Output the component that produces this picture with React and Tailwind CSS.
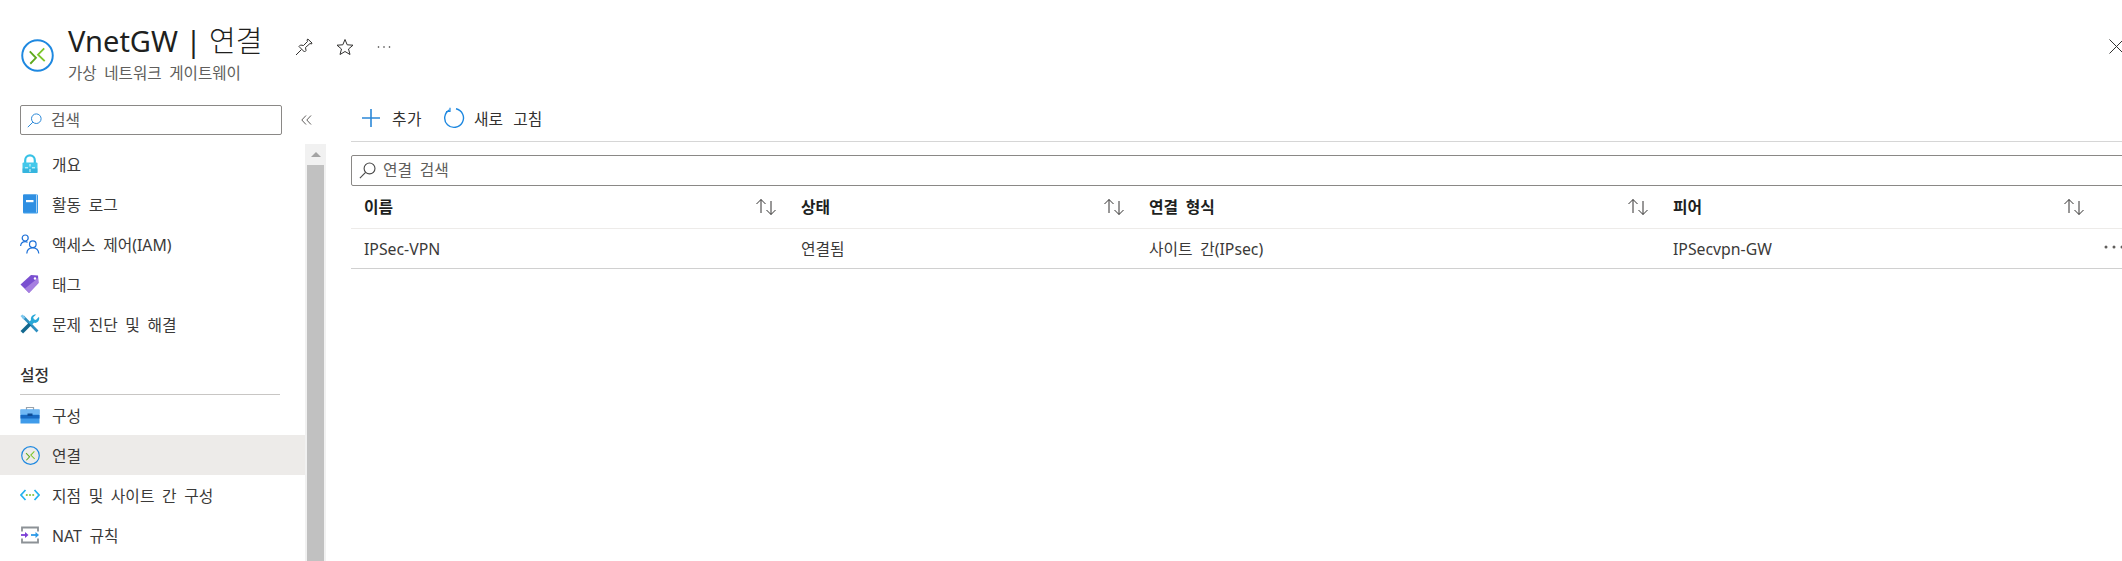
const Conn = ({ size = 20, sw = 1.9, chev = 1.8 }) => (
  <svg width={size} height={size} viewBox="0 0 32 32" fill="none">
    <circle cx="16" cy="16" r="14.8" stroke="#1e88e0" strokeWidth={sw} />
    <path d="M8.5 12 L14.5 18.2 L9 24" stroke="#5ea81e" strokeWidth={chev} />
    <path d="M22.5 9 L16.5 15.2 L23 21.5" stroke="#7cc52a" strokeWidth={chev} />
  </svg>
);
const SmallConn = () => <Conn size={19} sw={2} chev={1.7} />;
const Lock = () => (
  <svg width="20" height="20" viewBox="0 0 20 20" fill="none">
    <path d="M5.2 9V6.2a4.8 4.8 0 0 1 9.6 0V9" stroke="#37c2e6" strokeWidth="2.2" />
    <rect x="2.5" y="8.5" width="15" height="10.5" rx="1" fill="#45c8ea" />
    <rect x="2.5" y="14.5" width="15" height="4.5" fill="#2aa5d4" opacity=".55" />
    <path d="M10 10v2.5M10 15v3M5 13.8h3M12 13.8h3" stroke="#e8fbff" strokeWidth="1" />
  </svg>
);
const Book = () => (
  <svg width="20" height="20" viewBox="0 0 20 20" fill="none">
    <rect x="3" y="0.5" width="15" height="19" rx="1" fill="#3a9ae8" />
    <rect x="3" y="0.5" width="13.5" height="17.5" rx="1" fill="#2f8fe2" />
    <path d="M16.5 1v17.5" stroke="#a9d3f5" />
    <rect x="6" y="6" width="7.5" height="2.2" fill="#fff" />
  </svg>
);
const Users = () => (
  <svg width="20" height="20" viewBox="0 0 20 20" fill="none" stroke="#1a6fd8" strokeWidth="1.2">
    <circle cx="5.2" cy="4" r="3" />
    <path d="M0.6 12c.3-2.6 2-4.3 4.6-4.3 1 0 1.8.2 2.4.7" />
    <circle cx="12.8" cy="10.2" r="3.3" />
    <path d="M6.8 19.5c.2-3.4 2.6-5.6 6-5.6s5.6 2.2 6 5.6" />
  </svg>
);
const Tag = () => (
  <svg width="20" height="20" viewBox="0 0 20 20" fill="none">
    <path d="M0.5 10.5 L11 1 L18 1.5 L18.5 9 L9 19 Z" fill="#7a4fd0" />
    <path d="M5 14.5 L18 4 L18.5 9 L9 19 Z" fill="#a67fe0" />
    <circle cx="15" cy="4.5" r="1.2" fill="#fff" />
  </svg>
);
const Tools = () => (
  <svg width="20" height="20" viewBox="0 0 20 20" fill="none">
    <path d="M3 2.5 L17.5 17.5" stroke="#2e8fc0" strokeWidth="2.6" />
    <path d="M0.5 2 L2.5 0.5 L5.5 3.5 L3.5 5.5Z" fill="#7cc7ee" />
    <path d="M1.8 18.2 L10 10" stroke="#13688f" strokeWidth="3.6" />
    <path d="M19 2.8 L15.8 6 L13.8 5.2 L13.2 3.2 L16.2 0.5 C13 0 10.3 2.6 11 6 L8.5 8.8 L11.2 11.3 L14 8.8 C17.5 9.6 20 6.4 19 2.8Z" fill="#28a8d8" />
  </svg>
);
const Case = () => (
  <svg width="20" height="20" viewBox="0 0 20 20" fill="none">
    <path d="M6.5 5V2.5h7V5" stroke="#9ba3ab" strokeWidth="1.2" />
    <rect x="0.5" y="4.5" width="19" height="14" fill="#3f9bea" />
    <rect x="0.5" y="4.5" width="19" height="5" fill="#71b8f4" />
    <rect x="0.5" y="10" width="19" height="3.5" fill="#1769c2" />
    <rect x="7.5" y="8.5" width="5" height="2.5" fill="#0e4d96" />
  </svg>
);
const P2S = () => (
  <svg width="20" height="20" viewBox="0 0 20 20" fill="none">
    <path d="M5.5 5 L1 10 L5.5 15" stroke="#24b2ee" strokeWidth="1.7" />
    <path d="M14.5 5 L19 10 L14.5 15" stroke="#24b2ee" strokeWidth="1.7" />
    <circle cx="6.8" cy="10" r="1.1" fill="#86c440" />
    <circle cx="10" cy="10" r="1.1" fill="#86c440" />
    <circle cx="13.2" cy="10" r="1.1" fill="#86c440" />
  </svg>
);
const Nat = () => (
  <svg width="20" height="20" viewBox="0 0 20 20" fill="none">
    <path d="M2 6.5V2.5h16v4M2 13.5v4h16v-4" stroke="#8c9196" strokeWidth="1.8" />
    <path d="M1 10h5" stroke="#7c3fd6" strokeWidth="1.8" />
    <path d="M5 7l3.5 3L5 13Z" fill="#7c3fd6" />
    <path d="M11 10h5" stroke="#2e9be8" strokeWidth="1.8" />
    <path d="M15.5 7l3.5 3-3.5 3Z" fill="#2e9be8" />
  </svg>
);
const Search = ({ color = "#4a4a4a", size = 15 }) => (
  <svg width={size} height={size} viewBox="0 0 15 15" fill="none" stroke={color} strokeWidth="1">
    <circle cx="9.3" cy="5.7" r="4.8" />
    <path d="M5.8 9.2 L0.8 14.2" />
  </svg>
);
const Sort = () => (
  <svg width="22" height="18" viewBox="0 0 22 18" fill="none" stroke="#323130" strokeWidth="1">
    <path d="M6 15V1.5M1.5 6 L6 1.5 L10.5 6" />
    <path d="M16 3v13.5M11.5 12 L16 16.5 L20.5 12" />
  </svg>
);
const items1 = [
  [Lock, "개요"],
  [Book, "활동 로그"],
  [Users, "액세스 제어(IAM)"],
  [Tag, "태그"],
  [Tools, "문제 진단 및 해결"],
];
const items2 = [
  [Case, "구성"],
  [SmallConn, "연결", true],
  [P2S, "지점 및 사이트 간 구성"],
  [Nat, "NAT 규칙"],
];
const Item = ({ Icon, label, active }) => (
  <div className={`h-10 flex items-center pl-5 gap-[12px] text-[#3b3a39] ${active ? "bg-[#edebe9]" : ""}`}>
    <span className="w-[20px] h-[20px] flex items-center justify-center shrink-0"><Icon /></span>
    <span className="pt-[4px]">{label}</span>
  </div>
);
const cols = "grid grid-cols-[437px_348px_524px_470px]";
const Head = ({ children }) => (
  <div className="flex items-center justify-between pl-[13px] pr-[11px] font-semibold text-[#201f1e]">
    <span className="pt-[2px]">{children}</span><Sort />
  </div>
);
export default function App() {
  return (
    <div className="w-screen h-screen overflow-hidden bg-white">
      <div className="w-[2130px] h-[561px] flex flex-col text-[15.8px] [word-spacing:3.5px] text-[#323130]" style={{ fontFamily: '"Noto Sans","Noto Sans CJK KR",sans-serif' }}>
        <header className="h-[105px] shrink-0 flex pl-[21px] pr-[6px] pt-[23px]">
          <div className="mt-[16px] w-[33px] h-[33px] shrink-0"><Conn size={33} /></div>
          <div className="ml-[14px]">
            <h1 className="text-[29px] leading-[36px] font-normal text-[#201f1e] [word-spacing:0px]">VnetGW | <span className="font-light">연결</span></h1>
            <div className="mt-[5px] text-[15.6px] leading-[18px] text-[#605e5c]">가상 네트워크 게이트웨이</div>
          </div>
          <div className="ml-[33px] mt-[12px] flex items-center gap-[23px] h-[24px] text-[#323130]">
            <svg width="18" height="18" viewBox="0 0 18 18" fill="none" stroke="#323130" strokeWidth="1">
              <path d="M1 17 L6.5 11.5 M4 8.5 L9.5 14 L11 12.5 L10.5 9.5 L15 5.5 L16.5 6 L17 5 L12.8 1 L12 2 L12.5 3.5 L8.5 7.5 L5.5 7 Z" />
            </svg>
            <svg width="18" height="18" viewBox="0 0 18 18" fill="none" stroke="#323130" strokeWidth="1">
              <path d="M9 1.5 L11.2 6.8 L17 7.2 L12.5 11 L14 16.5 L9 13.5 L4 16.5 L5.5 11 L1 7.2 L6.8 6.8 Z" />
            </svg>
            <svg width="14" height="4" viewBox="0 0 14 4" fill="#323130">
              <circle cx="1.5" cy="2" r="0.8" /><circle cx="7" cy="2" r="0.8" /><circle cx="12.5" cy="2" r="0.8" />
            </svg>
          </div>
          <svg className="ml-auto mt-[16px] shrink-0" width="15" height="15" viewBox="0 0 15 15" fill="none" stroke="#323130" strokeWidth="1">
            <path d="M0.5 0.5 L14.5 14.5 M14.5 0.5 L0.5 14.5" />
          </svg>
        </header>
        <div className="flex-1 flex min-h-0">
          <aside className="w-[326px] shrink-0 flex flex-col min-h-0">
            <div className="h-[39px] shrink-0 flex pl-[20px]">
              <div className="w-[262px] h-[30px] border border-[#8a8886] rounded-[2px] flex items-center pl-[6px] gap-[9px] text-[#605e5c]">
                <Search color="#2b88d8" />
                <span className="pt-[2px]">검색</span>
              </div>
              <svg className="ml-[19px] mt-[9px]" width="11" height="12" viewBox="0 0 11 12" fill="none" stroke="#605e5c" strokeWidth="1">
                <path d="M5 1.5 L0.8 6 L5 10.5 M10 1.5 L5.8 6 L10 10.5" />
              </svg>
            </div>
            <div className="flex-1 flex min-h-0">
              <nav className="w-[305px] shrink-0">
                {items1.map(([I, l]) => <Item key={l} Icon={I} label={l} />)}
                <div className="ml-5 mr-[25px] mt-[20px] h-[31px] border-b border-[#c8c6c4] pt-[1px] font-medium leading-[20px] text-[#323130]">설정</div>
                {items2.map(([I, l, a]) => <Item key={l} Icon={I} label={l} active={a} />)}
              </nav>
              <div className="w-[21px] bg-[#f1f1f1] flex flex-col items-center">
                <div className="h-[21px] w-full flex items-center justify-center">
                  <div className="w-0 h-0 border-l-[5px] border-r-[5px] border-b-[5px] border-l-transparent border-r-transparent border-b-[#a3a3a3]" />
                </div>
                <div className="flex-1 w-[17px] bg-[#c1c1c1]" />
              </div>
            </div>
          </aside>
          <main className="flex-1 min-w-0 pl-[25px] flex flex-col">
            <div className="h-[37px] shrink-0 border-b border-[#d6d6d6] flex items-start pl-[10px]">
              <svg className="mt-[3px]" width="20" height="20" viewBox="0 0 20 20" fill="none" stroke="#2b88d8" strokeWidth="1.6">
                <path d="M10 1v18M1 10h18" />
              </svg>
              <span className="ml-[11px] mt-[4px] leading-[20px] tracking-[0.5px]">추가</span>
              <svg className="ml-[21px] mt-[2px]" width="22" height="22" viewBox="0 0 22 22" fill="none" stroke="#1e88e0" strokeWidth="1.4">
                <path d="M6.5 2.8 A9.4 9.4 0 1 0 13 1.8" />
                <path d="M7 0.8 V4.5 H3" strokeWidth="1.2" />
              </svg>
              <span className="ml-[9px] mt-[4px] leading-[20px] [word-spacing:6px]">새로 고침</span>
            </div>
            <div className="mt-[13px] h-[31px] shrink-0 border border-[#8a8886] rounded-[2px] flex items-center pl-[7px] gap-[7px] text-[#605e5c]">
              <Search size={17} />
              <span>연결 검색</span>
            </div>
            <div className={`${cols} h-[43px] items-center border-b border-[#edebe9]`}>
              <Head>이름</Head><Head>상태</Head><Head>연결 형식</Head>
              <div className="pr-[34px]"><Head>피어</Head></div>
            </div>
            <div className={`${cols} h-[40px] items-center border-b border-[#d0d0d0] text-[#3b3a39]`}>
              <div className="pl-[13px] pt-[2px]">IPSec-VPN</div>
              <div className="pl-[13px] pt-[2px]">연결됨</div>
              <div className="pl-[13px] pt-[2px]">사이트 간(IPsec)</div>
              <div className="pl-[13px] pt-[2px] flex items-center justify-between pr-[6px]">
                <span>IPSecvpn-GW</span>
                <svg width="20" height="4" viewBox="0 0 20 4" fill="#605e5c" className="-mt-[6px]">
                  <circle cx="2" cy="2" r="1.5" /><circle cx="10" cy="2" r="1.5" /><circle cx="18" cy="2" r="1.5" />
                </svg>
              </div>
            </div>
          </main>
        </div>
      </div>
    </div>
  );
}
